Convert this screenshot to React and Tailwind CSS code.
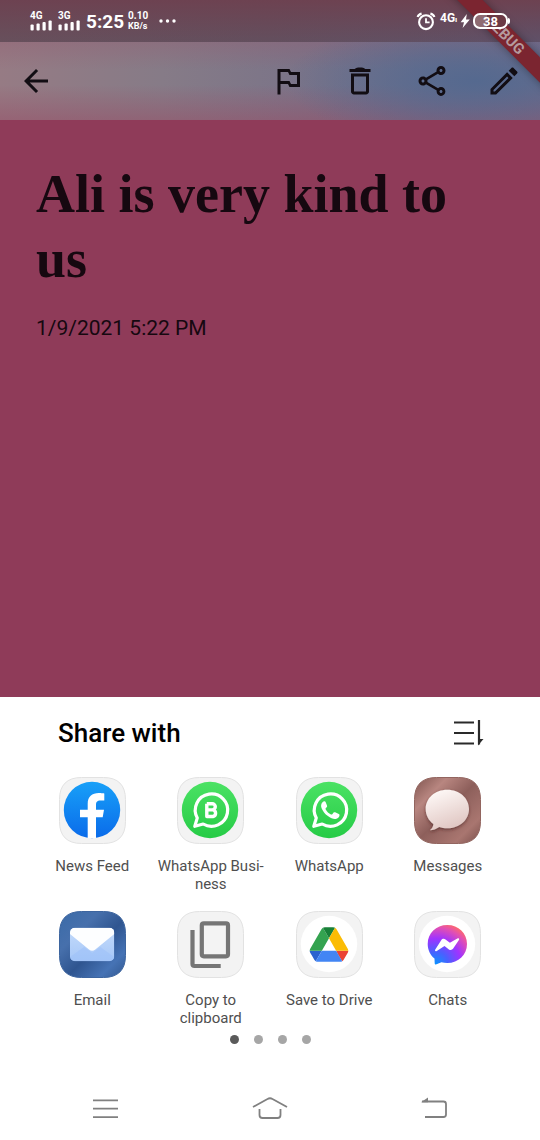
import { useState } from "react";

function SignalBars({ label }) {
  return (
    <div className="flex w-6 flex-col">
      <span className="text-[10px] leading-[9px] font-bold">{label}</span>
      <svg viewBox="0 0 24 11" className="h-[11px] w-6" fill="currentColor" aria-hidden="true">
        <rect x="0.5" y="4.5" width="3.2" height="6" rx="1" />
        <rect x="6.5" y="3.5" width="3.2" height="7" rx="1" />
        <rect x="12.5" y="2" width="3.2" height="8.5" rx="1" />
        <rect x="18.5" y="0.5" width="3.2" height="10" rx="1" />
      </svg>
    </div>
  );
}

function StatusBar() {
  return (
    <div className="relative z-10 flex h-[42px] items-center justify-between px-[30px] text-white">
      <div className="flex items-center">
        <div className="flex gap-1">
          <SignalBars label="4G" />
          <SignalBars label="3G" />
        </div>
        <span className="ml-1 pt-px text-[19px] leading-6 font-bold">5:25</span>
        <span className="ml-1 flex flex-col text-[9px] leading-[10px] font-bold">
          <span className="text-[10px]">0.10</span>
          <span>KB/s</span>
        </span>
        <svg viewBox="0 0 18 4" className="ml-[10px] h-1 w-[18px]" fill="currentColor" aria-hidden="true">
          <circle cx="3" cy="2" r="1.700" />
          <circle cx="9.500" cy="2" r="1.700" />
          <circle cx="16" cy="2" r="1.700" />
        </svg>
      </div>
      <div className="flex items-center">
        <svg viewBox="0 0 20 20" className="h-5 w-5" fill="none" stroke="currentColor" strokeWidth="2.100" aria-hidden="true">
          <circle cx="10" cy="11.200" r="6.900" />
          <path d="M10 7.200v4.200h3.600" strokeWidth="1.800" />
          <path d="M1.600 6C2.200 4.200 3.600 3 5.600 2.600M18.400 6c-.6-1.800-2-3-4-3.400" />
        </svg>
        <span className="ml-1 w-[18px] pb-1 text-[12px] leading-[14px] font-bold">
          4G<span className="text-[8px]">ı</span>
        </span>
        <svg viewBox="0 0 10 14" className="ml-[2px] h-[14px] w-[10px]" fill="currentColor" aria-hidden="true">
          <path d="M6.800 0L.6 8.200h3.400L2.600 14L9.800 5.400H6Z" />
        </svg>
        <span className="ml-[3px] flex h-4 w-[35px] items-center justify-center rounded-[7px] border-2 border-white bg-linear-to-r from-[#8f6b72] from-40% to-[#6b3a45] to-40% text-[13px] leading-none font-bold">
          38
        </span>
        <span className="h-[6px] w-[2px] rounded-r bg-white" />
      </div>
    </div>
  );
}

const toolbarIcons = {
  back: "M20 11H7.830l5.590-5.590L12 4l-8 8 8 8 1.410-1.410L7.830 13H20v-2z",
  flag: "M14 6l-1-2H5v17h2v-7h5l1 2h7V6h-6zm4 8h-4l-1-2H7V6h5l1 2h5v6z",
  trash:
    "M6 19c0 1.100.9 2 2 2h8c1.100 0 2-.9 2-2V7H6v12zM8 9h8v10H8V9zm7.500-5c-.9-.7-1.900-1-3.500-1s-2.600.3-3.500 1H5v2h14V4z",
  share:
    "M18 16.080c-.76 0-1.440.3-1.960.77L8.910 12.700c.05-.23.09-.46.09-.7s-.04-.47-.09-.7l7.050-4.110c.54.5 1.250.81 2.040.81 1.660 0 3-1.340 3-3s-1.340-3-3-3-3 1.340-3 3c0 .24.04.47.09.7L8.040 9.810C7.500 9.310 6.790 9 6 9c-1.660 0-3 1.340-3 3s1.340 3 3 3c.79 0 1.500-.31 2.040-.81l7.120 4.160c-.05.21-.08.43-.08.65 0 1.610 1.310 2.920 2.920 2.920s2.920-1.310 2.920-2.920-1.310-2.920-2.920-2.920zM18 4c.55 0 1 .45 1 1s-.45 1-1 1-1-.45-1-1 .45-1 1-1zM6 13c-.55 0-1-.45-1-1s.45-1 1-1 1 .45 1 1-.45 1-1 1zm12 7.020c-.55 0-1-.45-1-1s.45-1 1-1 1 .45 1 1-.45 1-1 1z",
  edit: "M14.060 9.020l.92.92L5.920 19H5v-.92l9.060-9.060M17.660 3c-.25 0-.51.1-.7.29l-1.830 1.830 3.750 3.750 1.830-1.830c.39-.39.39-1.020 0-1.410l-2.340-2.340c-.2-.2-.45-.29-.71-.29zm-3.600 3.190L3 17.250V21h3.750L17.810 9.940l-3.750-3.750z",
};

function ToolbarButton({ icon, label }) {
  return (
    <button type="button" aria-label={label} className="flex h-full w-[72px] items-center justify-center">
      <svg viewBox="0 0 24 24" className="h-9 w-9" fill="currentColor" aria-hidden="true">
        <path d={toolbarIcons[icon]} />
      </svg>
    </button>
  );
}

function DebugBanner() {
  return (
    <div className="pointer-events-none absolute top-0 right-0 h-24 w-24 overflow-hidden" aria-hidden="true">
      <div className="absolute top-[26px] -right-[65px] flex h-[18px] w-[200px] rotate-45 items-center justify-center bg-[#7b2530] text-[15px] leading-none font-bold text-[#b59a9e] shadow-[0_0_8px_rgba(0,0,0,0.35)]">
        DEBUG
      </div>
    </div>
  );
}

/* Rounded square behind every app glyph. */
function Plate({ fill = "#f3f3f3", stroke = "#e2e2e2" }) {
  return (
    <path
      d="M22.500.5H44.500C59 .5 66.500 8 66.500 22.500V44.500C66.500 59 59 66.500 44.500 66.500H22.500C8 66.500.5 59 .5 44.500V22.500C.5 8 8 .5 22.500.5Z"
      fill={fill}
      stroke={stroke}
    />
  );
}

function Glyph({ children }) {
  return (
    <svg viewBox="0 0 67 67" className="h-[67px] w-[67px]" aria-hidden="true">
      {children}
    </svg>
  );
}

function FacebookIcon() {
  return (
    <Glyph>
      <defs>
        <linearGradient id="fb" x1="0" y1="0" x2="0" y2="1">
          <stop offset="0" stopColor="#18a0f8" />
          <stop offset="1" stopColor="#0a6bea" />
        </linearGradient>
      </defs>
      <Plate />
      <circle cx="33" cy="33" r="28.200" fill="url(#fb)" />
      <path
        d="M28.700 60.900V40.300H21V32.700H28.700V27C28.700 19.500 33 16 39.800 16C42 16 45.300 16.400 45.300 16.400V23.400H41.500C38 23.400 37 25 37 28V32.700H45L43.700 40.300H37V60.900Q33 61.600 28.700 60.900Z"
        fill="#fff"
      />
    </Glyph>
  );
}

function WhatsAppBase({ id, children }) {
  return (
    <Glyph>
      <defs>
        <linearGradient id={id} x1="0" y1="0" x2="0" y2="1">
          <stop offset="0" stopColor="#4be264" />
          <stop offset="1" stopColor="#26cb46" />
        </linearGradient>
      </defs>
      <Plate />
      <circle cx="33" cy="33" r="28.200" fill={`url(#${id})`} />
      <path
        d="M17.800 49.300L20.300 40.900A16.200 16.200 0 1 1 26.200 47Z"
        fill="none"
        stroke="#fff"
        strokeWidth="3.200"
        strokeLinejoin="round"
      />
      {children}
    </Glyph>
  );
}

function WhatsAppBusinessIcon() {
  return (
    <WhatsAppBase id="wab">
      <path
        d="M29.800 26.700V39.500H36A3.400 3.400 0 0 0 36 32.900H29.800M29.800 26.700H35.200A3.100 3.100 0 0 1 35.200 32.900"
        fill="none"
        stroke="#fff"
        strokeWidth="3.400"
        strokeLinejoin="round"
      />
    </WhatsAppBase>
  );
}

function WhatsAppIcon() {
  return (
    <WhatsAppBase id="wa">
      <path
        d="M28.600 24.300C27.900 24.200 27.100 24.600 26.500 25.300C25 26.900 24.700 28.900 25.600 31.200C26.700 34 29 36.900 31.900 39.100C34.700 41.200 37.600 42.400 39.700 42C41.700 41.600 43.300 40.100 43.500 38.400C43.600 37.700 43.400 37.300 42.800 37L39.200 35.300C38.500 35 38 35.100 37.600 35.600L36.300 37.200C35.900 37.600 35.500 37.700 35 37.400C32.700 36.300 31 34.600 29.700 32.400C29.400 31.900 29.500 31.500 29.900 31.100L30.900 29.900C31.200 29.500 31.200 29.100 31 28.600L29.600 25.100C29.400 24.500 29.100 24.300 28.600 24.300Z"
        fill="#fff"
      />
    </WhatsAppBase>
  );
}

function MessagesIcon() {
  return (
    <Glyph>
      <defs>
        <linearGradient id="msgPlate" x1="0" y1="0" x2="1" y2="1">
          <stop offset="0" stopColor="#7f544f" />
          <stop offset="0.25" stopColor="#b88680" />
          <stop offset="0.5" stopColor="#8d5f5b" />
          <stop offset="0.8" stopColor="#a97670" />
          <stop offset="1" stopColor="#7b504c" />
        </linearGradient>
        <linearGradient id="msgBubble" x1="0.2" y1="0" x2="0.6" y2="1">
          <stop offset="0" stopColor="#fffaf8" />
          <stop offset="1" stopColor="#dfc5c1" />
        </linearGradient>
        <filter id="msgShadow" x="-20%" y="-20%" width="140%" height="150%">
          <feDropShadow dx="0" dy="1.500" stdDeviation="1.500" floodColor="#4a2422" floodOpacity="0.600" />
        </filter>
      </defs>
      <Plate fill="url(#msgPlate)" stroke="#92655f" />
      <path
        d="M33.300 12.700C45.500 12.700 55 21 55 32S45.500 51.300 33.300 51.300C30.300 51.300 27.700 50.900 25.200 50C22.500 52 19 53.300 15.700 53.300C18 51.500 19.300 49.500 19.400 47C14.700 43.600 11.700 38.300 11.700 32C11.700 21 21 12.700 33.300 12.700Z"
        fill="url(#msgBubble)"
        filter="url(#msgShadow)"
      />
    </Glyph>
  );
}

function EmailIcon() {
  return (
    <Glyph>
      <defs>
        <linearGradient id="mailPlate" x1="0" y1="0" x2="1" y2="1">
          <stop offset="0" stopColor="#3a6ba8" />
          <stop offset="0.3" stopColor="#4770ac" />
          <stop offset="0.55" stopColor="#2f5590" />
          <stop offset="0.8" stopColor="#4673b5" />
          <stop offset="1" stopColor="#31578f" />
        </linearGradient>
        <linearGradient id="mailBody" x1="0" y1="0" x2="0" y2="1">
          <stop offset="0" stopColor="#c4dafa" />
          <stop offset="1" stopColor="#a6c8f8" />
        </linearGradient>
        <clipPath id="mailClip">
          <rect x="11" y="16.700" width="44.300" height="33.600" rx="5" />
        </clipPath>
      </defs>
      <Plate fill="url(#mailPlate)" stroke="#3d659f" />
      <g clipPath="url(#mailClip)">
        <rect x="11" y="16.700" width="44.300" height="33.600" fill="url(#mailBody)" />
        <path d="M11 46L25 36L33.200 42L41.300 36L55.300 46V50.300H11Z" fill="#9fc2f8" opacity="0.600" />
        <path d="M11 16.700H55.300V23L36.300 38.500Q33.200 41.200 30 38.500L11 23Z" fill="#fdfeff" />
      </g>
    </Glyph>
  );
}

function CopyIcon() {
  return (
    <Glyph>
      <Plate />
      <g fill="none" stroke="#757575" strokeWidth="4.200">
        <rect x="24.800" y="12.300" width="26.200" height="33" rx="2" />
        <path d="M15.500 19V53Q15.500 55 17.500 55H43.700" />
      </g>
    </Glyph>
  );
}

function DriveIcon() {
  return (
    <Glyph>
      <Plate />
      <circle cx="33" cy="33" r="28.200" fill="#fff" />
      <g transform="translate(13.700 16.300) scale(0.442)">
        <path d="m6.600 66.850 3.850 6.650c.8 1.400 1.950 2.500 3.300 3.300l13.750-23.800h-27.500c0 1.550.4 3.100 1.200 4.500z" fill="#2c63cf" />
        <path d="m43.650 25-13.750-23.800c-1.350.8-2.500 1.900-3.300 3.300l-25.400 44a9.060 9.060 0 0 0 -1.200 4.500h27.500z" fill="#34a350" />
        <path d="m73.550 76.800c1.350-.8 2.500-1.900 3.300-3.300l1.600-2.750 7.650-13.250c.8-1.400 1.200-2.950 1.200-4.500h-27.502l5.852 11.500z" fill="#ea4335" />
        <path d="m43.650 25 13.750-23.800c-1.350-.8-2.900-1.200-4.500-1.200h-18.500c-1.600 0-3.150.45-4.500 1.200z" fill="#188038" />
        <path d="m59.800 53h-32.300l-13.750 23.800c1.350.8 2.900 1.200 4.500 1.200h50.800c1.600 0 3.150-.45 4.500-1.200z" fill="#4285f4" />
        <path d="m73.400 26.500-12.700-22c-.8-1.400-1.950-2.500-3.300-3.300l-13.750 23.800 16.150 28h27.450c0-1.550-.4-3.100-1.200-4.500z" fill="#fbbc04" />
      </g>
    </Glyph>
  );
}

function MessengerIcon() {
  return (
    <Glyph>
      <defs>
        <radialGradient id="chat" cx="0.2" cy="1" r="1.100">
          <stop offset="0" stopColor="#0a94ff" />
          <stop offset="0.3" stopColor="#4a60ff" />
          <stop offset="0.6" stopColor="#a033ff" />
          <stop offset="0.85" stopColor="#e14fb4" />
          <stop offset="1" stopColor="#ff6a68" />
        </radialGradient>
      </defs>
      <Plate />
      <circle cx="33" cy="33" r="28.200" fill="#fff" />
      <path
        d="M33.300 14C44.500 14 53 22.200 53 33S44.500 52 33.300 52C31.200 52 29.300 51.700 27.400 51.200L22.600 53.300C21.600 53.700 20.700 53.200 20.700 52.200L20.500 47.600C16.300 44 13.700 39 13.700 33C13.700 22.200 22 14 33.300 14Z"
        fill="url(#chat)"
      />
      <path
        d="M21.300 38.600L27.200 29.200C28.200 27.700 30.100 27.400 31.500 28.400L35.900 31.700L43.400 27.500C44.800 26.700 45.700 27.600 44.900 28.900L39.200 37.600C38.200 39.100 36.300 39.500 34.900 38.400L30.500 35.100L22.800 39.900C21.500 40.700 20.500 39.800 21.300 38.600Z"
        fill="#fff"
      />
    </Glyph>
  );
}

const targets = [
  { name: "News Feed", Icon: FacebookIcon },
  { name: "WhatsApp Busi-\nness", Icon: WhatsAppBusinessIcon },
  { name: "WhatsApp", Icon: WhatsAppIcon },
  { name: "Messages", Icon: MessagesIcon },
  { name: "Email", Icon: EmailIcon },
  { name: "Copy to\nclipboard", Icon: CopyIcon },
  { name: "Save to Drive", Icon: DriveIcon },
  { name: "Chats", Icon: MessengerIcon },
];

function ShareSheet() {
  const [page, setPage] = useState(0);
  return (
    <section aria-label="Share with" className="bg-white pt-5">
      <div className="flex h-8 items-center justify-between pr-[56px] pl-[58px]">
        <h2 className="text-[26px] leading-8 font-medium text-black">Share with</h2>
        <button type="button" aria-label="Sort apps" className="text-[#2a2a2a]">
          <svg viewBox="0 0 30 28" className="h-7 w-[30px]" fill="none" stroke="currentColor" strokeWidth="2.200" aria-hidden="true">
            <path d="M0 3.500H20M0 14H20M0 24.500H20M25 1V25.500" />
            <path d="M24 26.500V20H29.500Z" fill="currentColor" stroke="none" />
          </svg>
        </button>
      </div>
      <ul className="mt-7 grid grid-cols-4 gap-y-[18px] px-[33px]">
        {targets.map(({ name, Icon }) => (
          <li key={name}>
            <button type="button" className="flex w-full flex-col items-center">
              <Icon />
              <span className="mt-[13px] min-h-9 text-center text-[15px] leading-[18px] whitespace-pre text-[#4f4f4f]">
                {name}
              </span>
            </button>
          </li>
        ))}
      </ul>
      <div className="mt-2 flex justify-center gap-[15px]">
        {[0, 1, 2, 3].map((i) => (
          <button
            key={i}
            type="button"
            aria-label={`Page ${i + 1}`}
            onClick={() => setPage(i)}
            className={i === page ? "h-[9px] w-[9px] rounded-full bg-[#5a5a5a]" : "h-[9px] w-[9px] rounded-full bg-[#a6a6a6]"}
          />
        ))}
      </div>
      <nav aria-label="System" className="mt-8 flex h-16 items-center justify-between px-[88px] text-[#808080]">
        <button type="button" aria-label="Recent apps">
          <svg viewBox="0 0 36 36" className="h-9 w-9" fill="none" stroke="currentColor" strokeWidth="1.800" aria-hidden="true">
            <path d="M5 10.300H30M5 18.700H30M5 27.200H30" />
          </svg>
        </button>
        <button type="button" aria-label="Home">
          <svg viewBox="0 0 36 36" className="h-9 w-9" fill="none" stroke="currentColor" strokeWidth="1.800" aria-hidden="true">
            <path d="M1 17L15.500 9Q18 7.500 20.500 9L35 17M7.500 19V25Q7.500 28 10.500 28H25.500Q28.500 28 28.500 25V19" />
          </svg>
        </button>
        <button type="button" aria-label="Back">
          <svg viewBox="0 0 36 36" className="h-9 w-9" fill="none" stroke="currentColor" strokeWidth="1.800" aria-hidden="true">
            <path d="M6 11.500H27.500Q30 11.500 30 14V24.500Q30 27 27.500 27H9" />
            <path d="M5 12.200L12 7.500V12.200Z" fill="currentColor" stroke="none" />
          </svg>
        </button>
      </nav>
    </section>
  );
}

export default function App() {
  return (
    <div className="relative flex min-h-screen flex-col overflow-hidden bg-[#8f3b59] font-[Roboto,sans-serif]">
      <DebugBanner />
      <header className="text-[#120d13]">
        <div className="bg-[linear-gradient(to_bottom,#6d4251_0%,#67485700_100%),linear-gradient(to_right,#67505c_0%,#634f5e_50%,#5f5168_100%)]">
          <StatusBar />
        </div>
        <div className="flex h-[78px] items-center justify-between bg-[radial-gradient(ellipse_190px_65px_at_88%_50%,#55698f_0%,transparent_100%),linear-gradient(to_bottom,rgba(146,94,114,0.4)_0%,transparent_35%,transparent_55%,rgba(150,80,104,0.55)_100%),linear-gradient(to_right,#967b84_0%,#867b87_30%,#7b7488_55%,#6b708d_80%,#6d6d8c_100%)]">
          <ToolbarButton icon="back" label="Back" />
          <div className="flex h-full">
            <ToolbarButton icon="flag" label="Flag" />
            <ToolbarButton icon="trash" label="Delete" />
            <ToolbarButton icon="share" label="Share" />
            <ToolbarButton icon="edit" label="Edit" />
          </div>
        </div>
      </header>
      <main className="flex-1 px-9 pt-[42px] text-[#160810]">
        <h1 className="font-['Liberation_Serif',serif] text-[54px] leading-[65px] font-bold">Ali is very kind to us</h1>
        <p className="mt-[22px] text-[21px] leading-7">1/9/2021 5:22 PM</p>
      </main>
      <ShareSheet />
    </div>
  );
}
